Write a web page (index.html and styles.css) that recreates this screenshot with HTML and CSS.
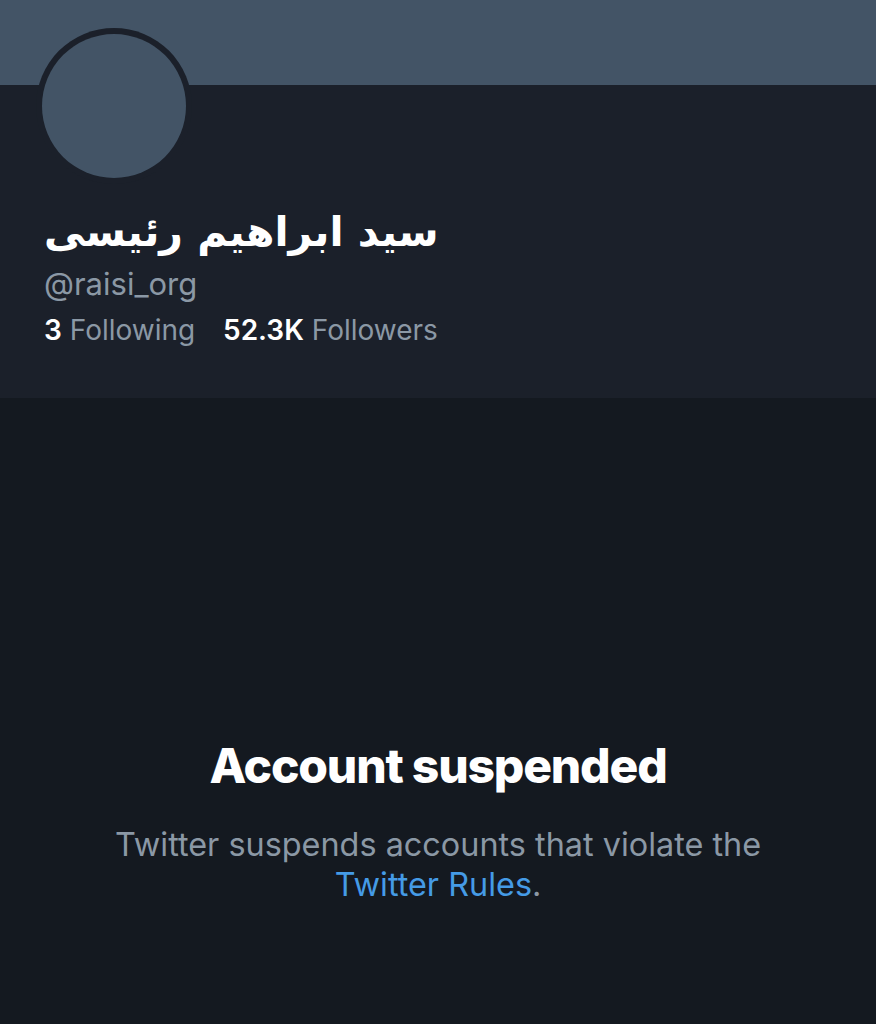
FILE: index.html
```html
<!DOCTYPE html>
<html>
<head>
  <title>سید ابراهیم رئیسی (@raisi_org)</title>
  <link rel="stylesheet" href="styles.css">
</head>
<body>
  <div class="banner"></div>

  <div class="profile">
    <div class="avatar-ring">
      <div class="avatar"></div>
    </div>
    <h1 class="name" dir="rtl">سید ابراهیم رئیسی</h1>
    <div class="handle">@raisi_org</div>
    <div class="stats">
      <span class="stat"><b>3</b> Following</span>
      <span class="stat"><b>52.3K</b> Followers</span>
    </div>
  </div>

  <div class="suspended">
    <h2>Account suspended</h2>
    <p>Twitter suspends accounts that violate the<br><a href="#">Twitter Rules</a>.</p>
  </div>
</body>
</html>
```

FILE: styles.css
```css
body {
  margin: 0;
  background-color: #141920;
  font-family: Inter, "Noto Sans", sans-serif;
  color: #ffffff;
}

.banner {
  height: 85px;
  background-color: #435466;
}

.profile {
  position: relative;
  background-color: #1b202a;
  height: 313px;
  padding: 0 44px;
  box-sizing: border-box;
}

.avatar-ring {
  position: absolute;
  left: 36px;
  top: -57px;
  width: 156px;
  height: 156px;
  border-radius: 50%;
  background-color: #1b202a;
  display: flex;
  align-items: center;
  justify-content: center;
}

.avatar {
  width: 144px;
  height: 144px;
  border-radius: 50%;
  background-color: #435466;
}

.name {
  margin: 0;
  padding-top: 119px;
  display: inline-block;
  font-family: "DejaVu Sans", sans-serif;
  font-size: 41px;
  font-weight: bold;
  line-height: 56px;
}

.handle {
  margin-top: 2px;
  font-size: 31px;
  line-height: 44px;
  color: #8b98a5;
}

.stats {
  margin-top: 2px;
  font-size: 28px;
  line-height: 44px;
  color: #8b98a5;
}

.stat {
  margin-right: 20px;
}

.stat b {
  color: #ffffff;
  font-weight: 600;
}

.suspended {
  text-align: center;
  padding-top: 338px;
}

.suspended h2 {
  margin: 0;
  font-size: 48px;
  font-weight: 800;
  letter-spacing: -1.2px;
  line-height: 60px;
}

.suspended p {
  margin: 29px 0 0;
  font-size: 32.4px;
  line-height: 40px;
  color: #8b98a5;
}

.suspended a {
  color: #459be6;
  text-decoration: none;
}
```
